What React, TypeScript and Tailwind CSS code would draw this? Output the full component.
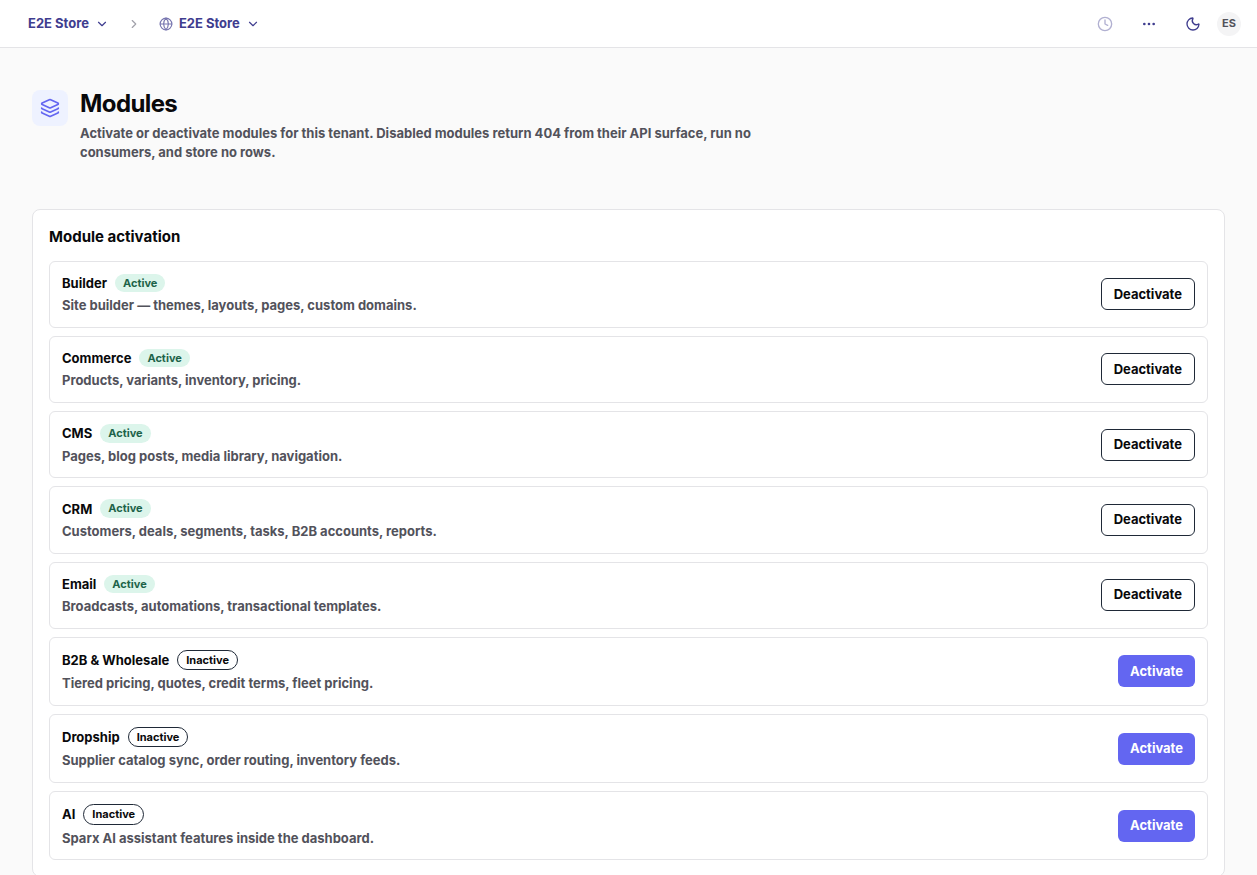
import React from "react";
import { ChevronDown, ChevronRight, Clock, Ellipsis, Globe, Layers, Moon } from "lucide-react";

interface Module {
  name: string;
  description: string;
  active: boolean;
}

const modules: Module[] = [
  { name: "Builder", description: "Site builder — themes, layouts, pages, custom domains.", active: true },
  { name: "Commerce", description: "Products, variants, inventory, pricing.", active: true },
  { name: "CMS", description: "Pages, blog posts, media library, navigation.", active: true },
  { name: "CRM", description: "Customers, deals, segments, tasks, B2B accounts, reports.", active: true },
  { name: "Email", description: "Broadcasts, automations, transactional templates.", active: true },
  { name: "B2B & Wholesale", description: "Tiered pricing, quotes, credit terms, fleet pricing.", active: false },
  { name: "Dropship", description: "Supplier catalog sync, order routing, inventory feeds.", active: false },
  { name: "AI", description: "Sparx AI assistant features inside the dashboard.", active: false },
];

function Header() {
  return (
    <header className="flex h-12 items-center justify-between border-b border-[#e4e4e7] bg-white pr-4 pl-7 text-[#3f3d8f]">
      <nav className="flex items-center gap-[18px]">
        <button className="flex items-center gap-1.5">
          <span>E2E Store</span>
          <ChevronDown size={14} />
        </button>
        <ChevronRight size={14} className="text-[#a1a1aa]" />
        <button className="flex items-center gap-1.5">
          <Globe size={14} className="opacity-70" />
          <span>E2E Store</span>
          <ChevronDown size={14} />
        </button>
      </nav>
      <div className="flex items-center">
        <Clock size={16} className="mr-7 opacity-40" />
        <Ellipsis size={16} className="mr-7" />
        <Moon size={16} className="mr-4" />
        <span className="flex size-6 items-center justify-center rounded-full bg-[#f4f4f5] text-[11px] text-[#52525b]">ES</span>
      </div>
    </header>
  );
}

function ModuleRow({ name, description, active }: Module) {
  return (
    <li className="flex items-center justify-between rounded-md border border-[#e4e4e7] p-3">
      <div>
        <div className="flex items-center gap-2">
          <span className="leading-4">{name}</span>
          {active ? (
            <span className="rounded-full bg-[#dcf5eb] px-2 py-px text-[11px] leading-[16.4px] text-[#1c6349]">Active</span>
          ) : (
            <span className="rounded-full border border-[#1f2937] px-2 py-px text-[11px] leading-[16.4px]">Inactive</span>
          )}
        </div>
        <p className="mt-1 leading-[18.8px] text-[#52525b]">{description}</p>
      </div>
      {active ? (
        <button className="h-8 rounded-md border border-[#1f2937] px-3">Deactivate</button>
      ) : (
        <button className="h-8 rounded-md bg-[#6366f1] px-3 text-white">Activate</button>
      )}
    </li>
  );
}

export default function App() {
  return (
    <div className="h-[875px] overflow-hidden bg-[#fafafa] font-['Inter',sans-serif] text-[13px] font-bold text-[#09090b]">
      <Header />
      <main className="px-8 pt-10">
        <div className="flex gap-3">
          <div className="mt-0.5 flex size-9 items-center justify-center rounded-lg bg-[#eef2ff] text-[#6366f1]">
            <Layers size={20} strokeWidth={2} />
          </div>
          <div>
            <h1 className="text-2xl leading-[31px] tracking-[-0.6px]">Modules</h1>
            <p className="mt-[5px] w-[680px] leading-[19px] text-[#52525b]">
              Activate or deactivate modules for this tenant. Disabled modules return 404 from their API surface, run no
              consumers, and store no rows.
            </p>
          </div>
        </div>
        <section className="mt-[46.7px] rounded-lg border border-[#e4e4e7] bg-white p-4">
          <h2 className="text-[15px] leading-[22px]">Module activation</h2>
          <ul className="mt-[13px] flex flex-col gap-2">
            {modules.map((module) => (
              <ModuleRow key={module.name} {...module} />
            ))}
          </ul>
        </section>
      </main>
    </div>
  );
}
